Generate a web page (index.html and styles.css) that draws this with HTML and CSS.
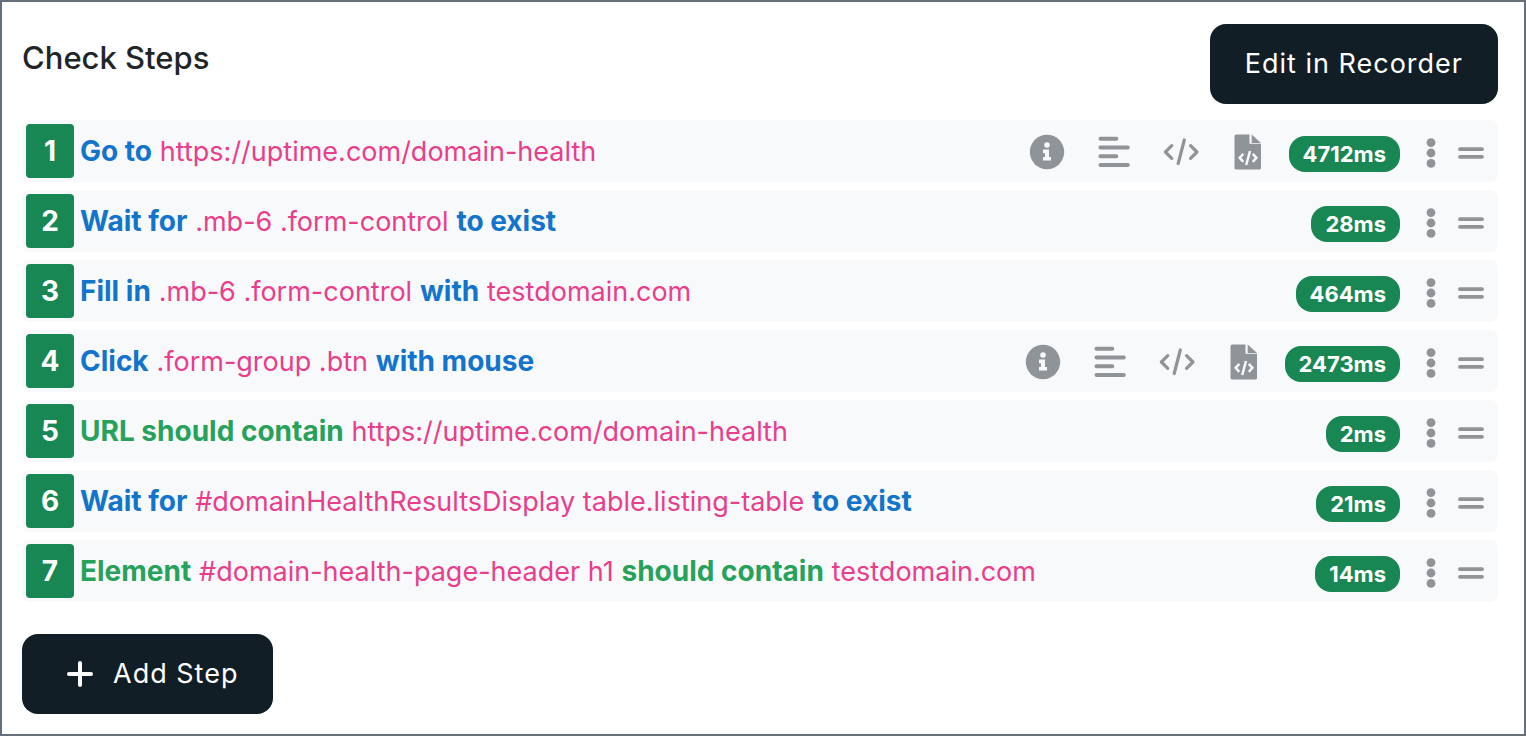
FILE: index.html
```html
<!DOCTYPE html>
<html lang="en">
<head>
<meta charset="utf-8">
<meta name="viewport" content="width=device-width, initial-scale=1">
<title>Check Steps</title>
<link rel="stylesheet" href="styles.css">
</head>
<body>
<svg class="sprite" aria-hidden="true">
  <symbol id="info" viewBox="0 0 36 36"><circle cx="18" cy="18" r="17.2" fill="currentColor"/><circle cx="18" cy="11" r="2.8" fill="#f8f9fb"/><path d="M14 15.5h6v7.500h2v3.600h-8V23h2v-3.800h-2z" fill="#f8f9fb"/></symbol>
  <symbol id="lines" viewBox="0 0 36 36"><path d="M4.500 4.700h15.800M4.500 13.400h27.300M4.500 22.200h15.800M4.500 31h27.300" fill="none" stroke="currentColor" stroke-width="4" stroke-linecap="round"/></symbol>
  <symbol id="code" viewBox="0 0 36 36"><path d="M21.300 6 15.200 29.500M8.700 11.700 2.400 18l6.300 6.300M27.600 11.700l6.300 6.300-6.300 6.300" fill="none" stroke="currentColor" stroke-width="3.200" stroke-linecap="round" stroke-linejoin="round"/></symbol>
  <symbol id="file" viewBox="0 0 36 36"><path d="M6.200.500h13.300v9.300h11.500v24.100a1.700 1.700 0 0 1-1.700 1.700H6.200a1.700 1.700 0 0 1-1.700-1.700V2.200A1.700 1.700 0 0 1 6.200.500z" fill="currentColor"/><path d="M21.700.500 31 9h-9.300z" fill="currentColor"/><path d="m20 17-3.800 14M13.300 19.800 9.700 23.800l3.600 4M22.800 19.800l3.600 4-3.600 4" fill="none" stroke="#f8f9fb" stroke-width="2.500"/></symbol>
  <symbol id="dots" viewBox="0 0 12 36"><circle cx="6" cy="7.600" r="4.400" fill="currentColor"/><circle cx="6" cy="18" r="4.400" fill="currentColor"/><circle cx="6" cy="28.400" r="4.400" fill="currentColor"/></symbol>
  <symbol id="grip" viewBox="0 0 26 36"><path d="M2 14.200h22M2 21.800h22" stroke="currentColor" stroke-width="3.800" stroke-linecap="round"/></symbol>
</svg>
<main class="panel">
  <header class="panel-head">
    <h1 class="title">Check Steps</h1>
    <button class="btn" type="button">Edit in Recorder</button>
  </header>
  <ol class="steps">
    <li class="step">
      <span class="num">1</span>
      <p class="text"><b class="action">Go to</b> <span class="value">https://uptime.com/domain-health</span></p>
      <div class="tools">
        <button class="icon" type="button" aria-label="Info"><svg><use href="#info"/></svg></button>
        <button class="icon" type="button" aria-label="Log"><svg><use href="#lines"/></svg></button>
        <button class="icon" type="button" aria-label="Source"><svg><use href="#code"/></svg></button>
        <button class="icon" type="button" aria-label="Source file"><svg><use href="#file"/></svg></button>
      </div>
      <span class="time">4712ms</span>
      <button class="icon menu" type="button" aria-label="More"><svg><use href="#dots"/></svg></button>
      <button class="icon grip" type="button" aria-label="Reorder"><svg><use href="#grip"/></svg></button>
    </li>
    <li class="step">
      <span class="num">2</span>
      <p class="text"><b class="action">Wait for</b> <span class="value">.mb-6 .form-control</span> <b class="action">to exist</b></p>
      <span class="time">28ms</span>
      <button class="icon menu" type="button" aria-label="More"><svg><use href="#dots"/></svg></button>
      <button class="icon grip" type="button" aria-label="Reorder"><svg><use href="#grip"/></svg></button>
    </li>
    <li class="step">
      <span class="num">3</span>
      <p class="text"><b class="action">Fill in</b> <span class="value">.mb-6 .form-control</span> <b class="action">with</b> <span class="value">testdomain.com</span></p>
      <span class="time">464ms</span>
      <button class="icon menu" type="button" aria-label="More"><svg><use href="#dots"/></svg></button>
      <button class="icon grip" type="button" aria-label="Reorder"><svg><use href="#grip"/></svg></button>
    </li>
    <li class="step">
      <span class="num">4</span>
      <p class="text"><b class="action">Click</b> <span class="value">.form-group .btn</span> <b class="action">with mouse</b></p>
      <div class="tools">
        <button class="icon" type="button" aria-label="Info"><svg><use href="#info"/></svg></button>
        <button class="icon" type="button" aria-label="Log"><svg><use href="#lines"/></svg></button>
        <button class="icon" type="button" aria-label="Source"><svg><use href="#code"/></svg></button>
        <button class="icon" type="button" aria-label="Source file"><svg><use href="#file"/></svg></button>
      </div>
      <span class="time">2473ms</span>
      <button class="icon menu" type="button" aria-label="More"><svg><use href="#dots"/></svg></button>
      <button class="icon grip" type="button" aria-label="Reorder"><svg><use href="#grip"/></svg></button>
    </li>
    <li class="step">
      <span class="num">5</span>
      <p class="text"><b class="assert">URL should contain</b> <span class="value">https://uptime.com/domain-health</span></p>
      <span class="time">2ms</span>
      <button class="icon menu" type="button" aria-label="More"><svg><use href="#dots"/></svg></button>
      <button class="icon grip" type="button" aria-label="Reorder"><svg><use href="#grip"/></svg></button>
    </li>
    <li class="step">
      <span class="num">6</span>
      <p class="text"><b class="action">Wait for</b> <span class="value">#domainHealthResultsDisplay table.listing-table</span> <b class="action">to exist</b></p>
      <span class="time">21ms</span>
      <button class="icon menu" type="button" aria-label="More"><svg><use href="#dots"/></svg></button>
      <button class="icon grip" type="button" aria-label="Reorder"><svg><use href="#grip"/></svg></button>
    </li>
    <li class="step">
      <span class="num">7</span>
      <p class="text"><b class="assert">Element</b> <span class="value">#domain-health-page-header h1</span> <b class="assert">should contain</b> <span class="value">testdomain.com</span></p>
      <span class="time">14ms</span>
      <button class="icon menu" type="button" aria-label="More"><svg><use href="#dots"/></svg></button>
      <button class="icon grip" type="button" aria-label="Reorder"><svg><use href="#grip"/></svg></button>
    </li>
  </ol>
  <button class="btn btn-add" type="button"><svg class="plus" viewBox="0 0 26 26" aria-hidden="true"><path d="M13 2v22M2 13h22" stroke="currentColor" stroke-width="4" stroke-linecap="round"/></svg>Add Step</button>
</main>
</body>
</html>
```
FILE: styles.css
```css
* {
  box-sizing: border-box;
}

body {
  margin: 0;
  background: #fff;
  color: #212529;
  font-family: Inter, "Liberation Sans", sans-serif;
  font-size: 28px;
  line-height: 36px;
}

button {
  font: inherit;
  border: 0;
  cursor: pointer;
}

.sprite {
  display: none;
}

.panel {
  min-height: 100vh;
  padding: 22px 26px 20px 20px;
  border: 2px solid #65707b;
}

.panel-head {
  display: flex;
  justify-content: space-between;
  align-items: flex-start;
  margin-bottom: 16px;
}

.title {
  margin: 14px 0 0;
  font-size: 31px;
  line-height: 40px;
  font-weight: 500;
}

.btn {
  display: inline-flex;
  align-items: center;
  padding: 22px 35px;
  border-radius: 16px;
  background: #111e25;
  color: #fff;
  font-size: 27px;
  letter-spacing: 1px;
}

.btn-add {
  gap: 20px;
  padding-left: 45px;
}

.plus {
  width: 26px;
  height: 26px;
}

.steps {
  display: flex;
  flex-direction: column;
  gap: 8px;
  margin: 0 0 32px;
  padding: 0;
  list-style: none;
}

.step {
  display: flex;
  align-items: center;
  padding: 4px 14px 4px 4px;
  border-radius: 8px;
  background: #f8f9fb;
}

.num {
  flex: none;
  width: 48px;
  padding: 9px 0;
  border-radius: 4px;
  background: #198754;
  color: #fff;
  font-weight: 700;
  text-align: center;
}

.text {
  flex: 1;
  margin: 0 0 0 6px;
}

.action,
.assert {
  font-weight: 700;
}

.action {
  color: #1374cc;
}

.assert {
  color: #26a25b;
}

.value {
  color: #e83e8c;
  font-size: 27px;
}

.tools {
  display: flex;
  gap: 31px;
  margin: 2px 23px 0 0;
}

.icon {
  flex: none;
  display: block;
  width: 36px;
  height: 36px;
  padding: 0;
  background: none;
  color: #8f9498;
}

.icon svg {
  display: block;
  width: 100%;
  height: 100%;
}

.time {
  flex: none;
  margin-top: 6px;
  padding: 0 14px;
  border-radius: 16px;
  background: #198754;
  color: #fff;
  font-size: 22px;
  font-weight: 700;
}

.menu {
  width: 12px;
  margin: 4px 0 0 25px;
}

.grip {
  width: 26px;
  margin: 4px 0 0 21px;
}
```
